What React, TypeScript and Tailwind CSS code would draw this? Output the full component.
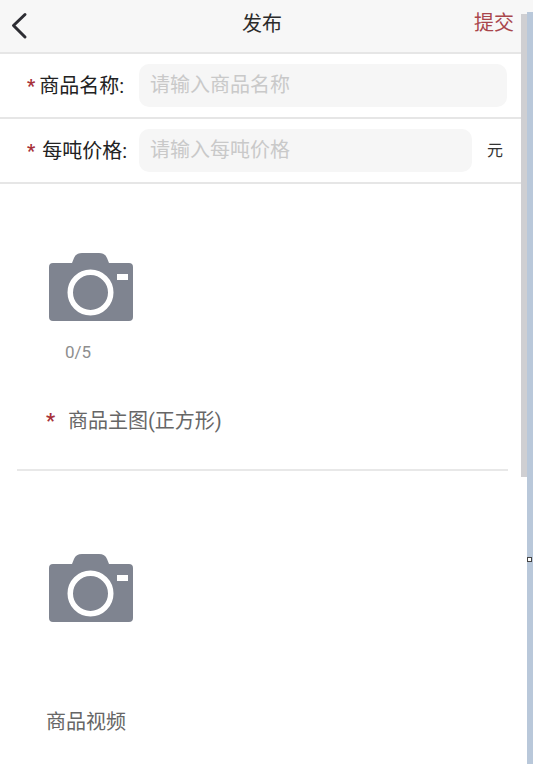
import React from 'react';

const CJK = "font-['Roboto','Noto_Sans_CJK_SC',sans-serif]";

const CameraIcon = () => (
  <svg width="84" height="70" viewBox="0 0 84 70" className="block">
    <path
      d="M4 10H23L25 5Q27 0 33 0H50Q56 0 58 5L60 10H80Q84 10 84 14V64Q84 68 80 68H4Q0 68 0 64V14Q0 10 4 10Z"
      fill="#7f8490"
    />
    <circle cx="41.5" cy="39.5" r="20.25" fill="none" stroke="#fff" strokeWidth="5.5" />
    <rect x="68" y="21" width="11" height="6" fill="#fff" />
  </svg>
);

const FormRow = ({ label, placeholder, unit, gap }: { label: string; placeholder: string; unit?: string; gap: string }) => (
  <div className="flex h-[65px] items-center border-b-2 border-[#e6e6e6] pl-[27px] pr-[26px]">
    <div className={`flex w-[112px] items-center whitespace-nowrap text-[20px] text-[#222] ${gap}`}>
      <span className="text-[18px] font-bold leading-none text-[#a8323a]">*</span>
      <span>{label}</span>
    </div>
    <div className="flex h-[43px] flex-1 items-center rounded-[10px] bg-[#f6f6f6] pb-[2px] pl-[11px] text-[20px] text-[#c9c9c9]">
      {placeholder}
    </div>
    {unit && <span className="ml-[15px] mr-[4px] text-[16px] text-[#333]">{unit}</span>}
  </div>
);

export default function App() {
  return (
    <div className={`relative h-[764px] w-[533px] overflow-hidden bg-white ${CJK}`}>
      <div className="flex h-[54px] items-center justify-between border-b-2 border-[#e6e6e6] bg-[#f7f7f7] pl-[10px] pr-[19px]">
        <svg width="18" height="28" viewBox="0 0 18 28">
          <path d="M15 2.5L3.5 13.5L15 25" fill="none" stroke="#2d2d33" strokeWidth="3" strokeLinecap="round" strokeLinejoin="round" />
        </svg>
        <span className="-mt-[4px] ml-[22px] text-[20px] leading-[40px] text-[#2b2b2b]">发布</span>
        <span className="-mt-[6px] text-[20px] leading-[40px] text-[#a9464c]">提交</span>
      </div>

      <FormRow label="商品名称:" placeholder="请输入商品名称" gap="gap-[4px]" />
      <FormRow label="每吨价格:" placeholder="请输入每吨价格" unit="元" gap="gap-[7px]" />

      <div className="pl-[49px] pt-[69px]">
        <CameraIcon />
        <div className="ml-[16px] mt-[17px] text-[17px] leading-[24px] text-[#8e8e8e]">0/5</div>
      </div>
      <div className="mt-[43px] flex items-center pl-[46px] text-[20px] leading-[28px] text-[#666]">
        <span className="w-[22px] font-bold text-[#a8323a]">*</span>
        <span>商品主图(正方形)</span>
      </div>

      <div className="ml-[17px] mr-[25px] mt-[34px] h-[2px] bg-[#e8e8e8]" />

      <div className="pl-[49px] pt-[83px]">
        <CameraIcon />
      </div>
      <div className="mt-[84px] pl-[46px] text-[20px] leading-[28px] text-[#666]">商品视频</div>

      {/* scrollbar + window edge on top of the page */}
      <div className="absolute right-[6px] top-[14px] h-[463px] w-[6px] bg-[#cfcfd2]" />
      <div className="absolute bottom-0 right-0 top-[12px] w-[6px] bg-[#b9c8da]" />
      <div className="absolute right-[1px] top-[557px] h-[5px] w-[5px] border border-[#444] bg-white" />
    </div>
  );
}
